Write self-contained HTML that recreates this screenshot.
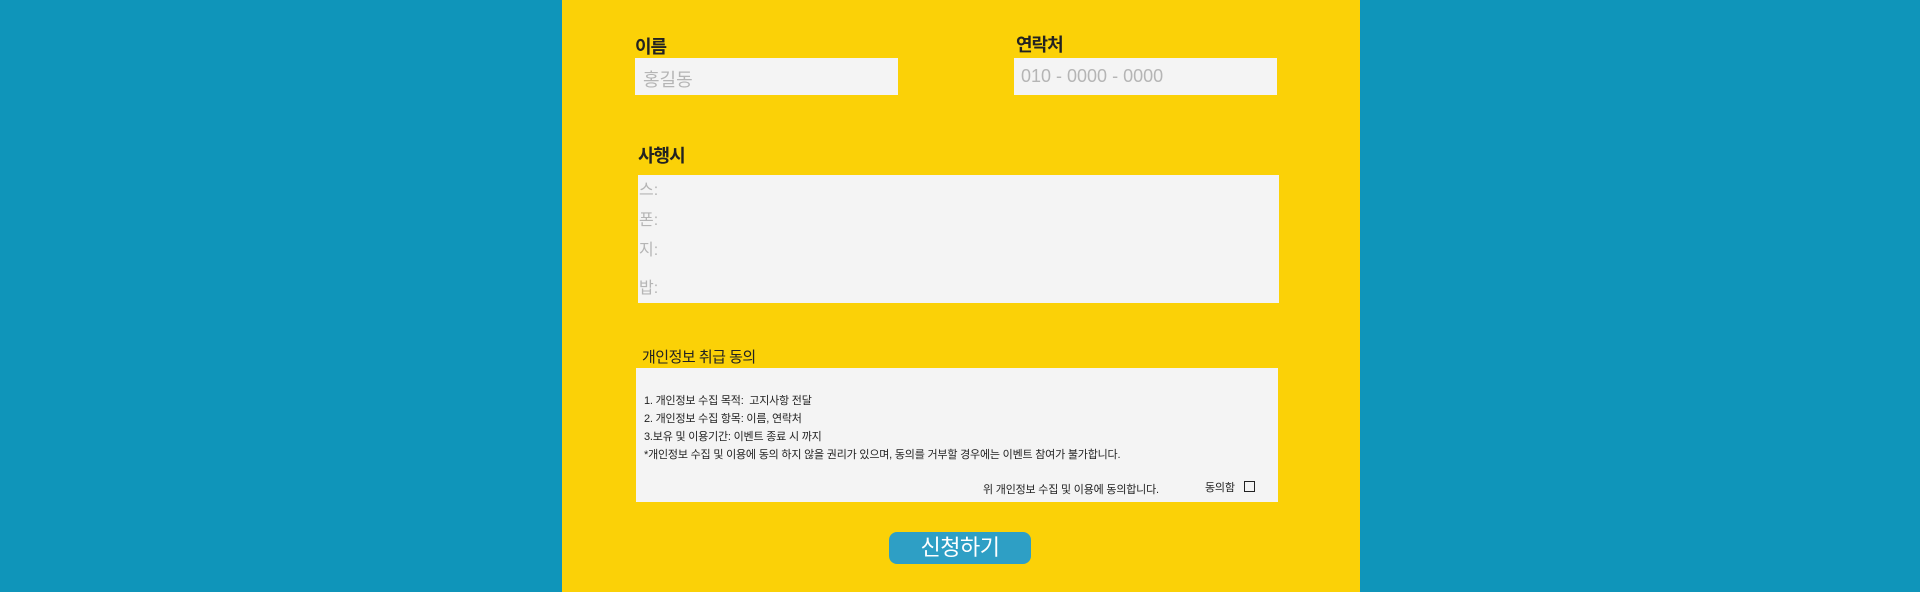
<!DOCTYPE html>
<html><head><meta charset="utf-8"><style>
body{margin:0;width:1920px;height:592px;background:#0f95ba;position:relative;overflow:hidden;font-family:"Liberation Sans","Noto Sans CJK KR",sans-serif}
.y{position:absolute;left:562px;top:0;width:798px;height:592px;background:#fbd107}
.a{position:absolute}
.lbl{font-weight:bold;font-size:18px;color:#222;letter-spacing:-1px}
.in{background:#f4f4f4}
.ph{color:#b5b5b5;font-size:18px}
.t{font-size:11px;color:#222;letter-spacing:-0.2px}
</style></head><body>
<div class="y"></div>
<div class="a lbl" style="left:635px;top:33px">이름</div>
<div class="a lbl" style="left:1016px;top:31px">연락처</div>
<div class="a in" style="left:635px;top:58px;width:263px;height:37px"></div>
<div class="a in" style="left:1014px;top:58px;width:263px;height:37px"></div>
<div class="a ph" style="left:643px;top:66px">홍길동</div>
<div class="a ph" style="left:1021px;top:66px">010 - 0000 - 0000</div>
<div class="a lbl" style="left:638px;top:142px">사행시</div>
<div class="a in" style="left:638px;top:175px;width:641px;height:128px"></div>
<div class="a ph" style="left:639px;top:176px;font-size:16px">스:</div>
<div class="a ph" style="left:639px;top:206px;font-size:16px">폰:</div>
<div class="a ph" style="left:639px;top:236px;font-size:16px">지:</div>
<div class="a ph" style="left:639px;top:274px;font-size:16px">밥:</div>
<div class="a" style="left:642px;top:346px;font-size:15px;color:#222;letter-spacing:-0.5px">개인정보 취급 동의</div>
<div class="a in" style="left:636px;top:368px;width:642px;height:134px"></div>
<div class="a t" style="left:644px;top:392px;line-height:18px">1. 개인정보 수집 목적:&nbsp; 고지사항 전달<br>2. 개인정보 수집 항목: 이름, 연락처<br>3.보유 및 이용기간: 이벤트 종료 시 까지<br>*개인정보 수집 및 이용에 동의 하지 않을 권리가 있으며, 동의를 거부할 경우에는 이벤트 참여가 불가합니다.</div>
<div class="a t" style="left:983px;top:481px">위 개인정보 수집 및 이용에 동의합니다.</div>
<div class="a t" style="left:1205px;top:479px">동의함</div>
<div class="a" style="left:1244px;top:481px;width:9px;height:9px;border:1px solid #222"></div>
<div class="a" style="left:889px;top:532px;width:142px;height:32px;background:#2e9fc5;border-radius:8px;color:#fff;font-size:22px;text-align:center;line-height:32px;letter-spacing:-0.5px">신청하기</div>
</body></html>
